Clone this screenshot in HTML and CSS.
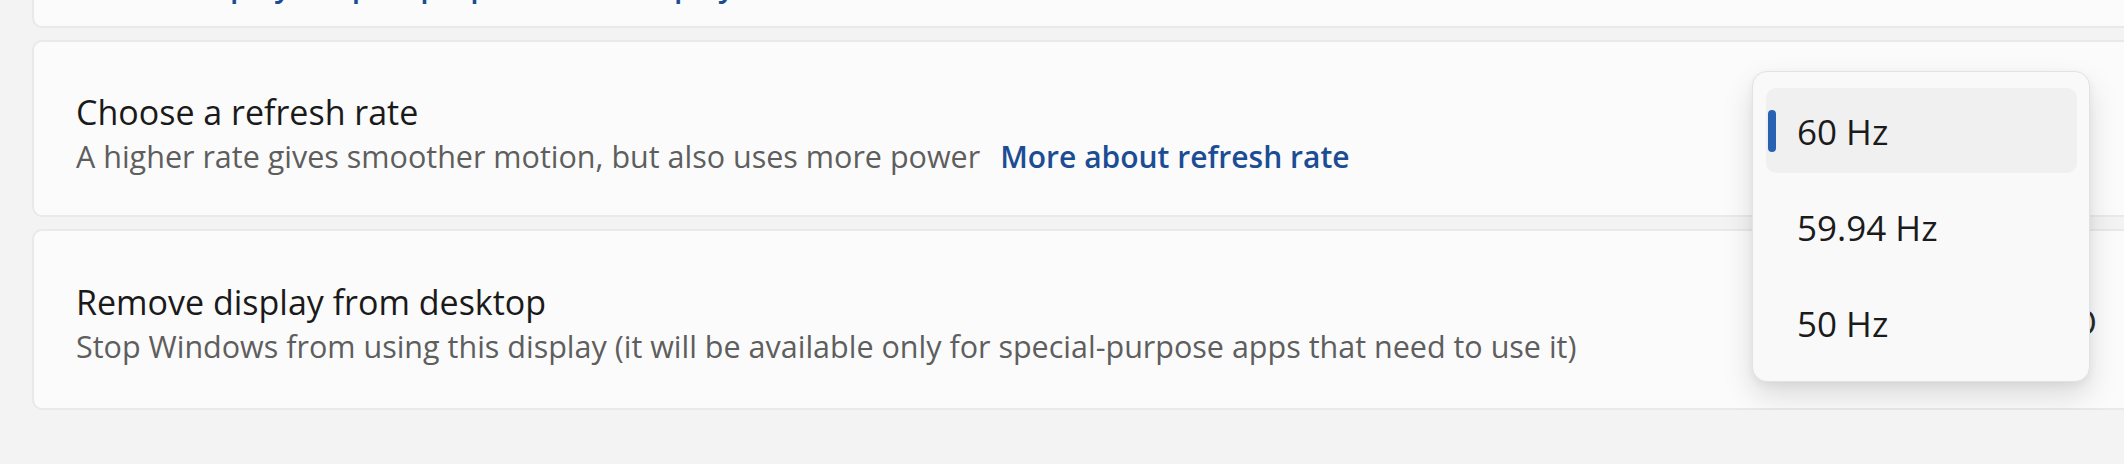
FILE: index.html
```html
<!DOCTYPE html>
<html lang="en">
<head>
<meta charset="utf-8">
<title>Advanced display</title>
<link rel="stylesheet" href="styles.css">
</head>
<body>
<div class="page">
  <div class="card card-top">
    <div class="top-link-line"><a class="link">Display adapter properties for Display 1</a></div>
  </div>

  <div class="card card-refresh">
    <div class="text">
      <div class="title">Choose a refresh rate</div>
      <div class="desc">A higher rate gives smoother motion, but also uses more power<a class="link more">More about refresh rate</a></div>
    </div>
  </div>

  <div class="card card-remove">
    <div class="text">
      <div class="title">Remove display from desktop</div>
      <div class="desc">Stop Windows from using this display (it will be available only for special-purpose apps that need to use it)</div>
    </div>
    <span class="ctl-edge">O</span>
  </div>

  <div class="menu">
    <div class="item selected"><span class="indicator"></span><span class="label">60 Hz</span></div>
    <div class="item"><span class="indicator off"></span><span class="label">59.94 Hz</span></div>
    <div class="item"><span class="indicator off"></span><span class="label">50 Hz</span></div>
  </div>
</div>
</body>
</html>
```

FILE: styles.css
```css
html, body {
  margin: 0;
  padding: 0;
}

body {
  background: #f3f3f3;
  overflow: hidden;
  font-family: "Open Sans", "Noto Sans", sans-serif;
  color: #1b1b1b;
}

.page {
  position: relative;
  width: 2200px;
  padding-left: 32px;
  box-sizing: border-box;
  display: flex;
  flex-direction: column;
  gap: 12px;
}

.card {
  background: #fbfbfb;
  border: 2px solid #e9e9e9;
  border-radius: 10px;
  box-sizing: border-box;
  padding: 0 42px;
  display: flex;
  align-items: center;
}

.card-top {
  height: 100px;
  margin-top: -72px;
  margin-bottom: 0;
  align-items: flex-end;
  padding-bottom: 18px;
  padding-left: 151px;
}

.top-link-line {
  font-size: 30px;
  line-height: 44px;
}

.card-refresh {
  padding-top: 48px;
  padding-bottom: 36px;
}

.card-remove {
  padding-top: 49px;
  padding-bottom: 40px;
  justify-content: space-between;
}

.text {
  display: flex;
  flex-direction: column;
}

.title {
  font-size: 34px;
  line-height: 44px;
  color: #1a1a1a;
  white-space: nowrap;
}

.desc {
  font-size: 30.5px;
  line-height: 44px;
  color: #5e5e5e;
  white-space: nowrap;
}

.link {
  color: #1c4d94;
  font-weight: 600;
  text-decoration: none;
}

.more {
  margin-left: 20px;
  font-size: 30px;
}

.ctl-edge {
  font-size: 34px;
  line-height: 44px;
  color: #2a2a2a;
  margin-right: 59px;
  margin-top: -4px;
}

.menu {
  position: absolute;
  left: 1752px;
  top: 71px;
  width: 338px;
  height: 311px;
  box-sizing: border-box;
  padding: 16px 12px 16px 13px;
  background: #f9f9f9;
  border: 1px solid #e2e2e2;
  border-radius: 15px;
  box-shadow: 0 14px 30px rgba(0, 0, 0, 0.13), 0 3px 8px rgba(0, 0, 0, 0.05);
  display: flex;
  flex-direction: column;
  gap: 11px;
}

.item {
  height: 85px;
  border-radius: 10px;
  display: flex;
  align-items: center;
  font-size: 35px;
  color: #1b1b1b;
}

.item.selected {
  background: #f0f0f0;
}

.indicator {
  width: 8px;
  height: 42px;
  margin-left: 2px;
  border-radius: 4px;
  background: #2a62b3;
  flex: none;
}

.indicator.off {
  background: transparent;
}

.label {
  margin-left: 21px;
  padding-top: 2px;
  line-height: 83px;
}
```
